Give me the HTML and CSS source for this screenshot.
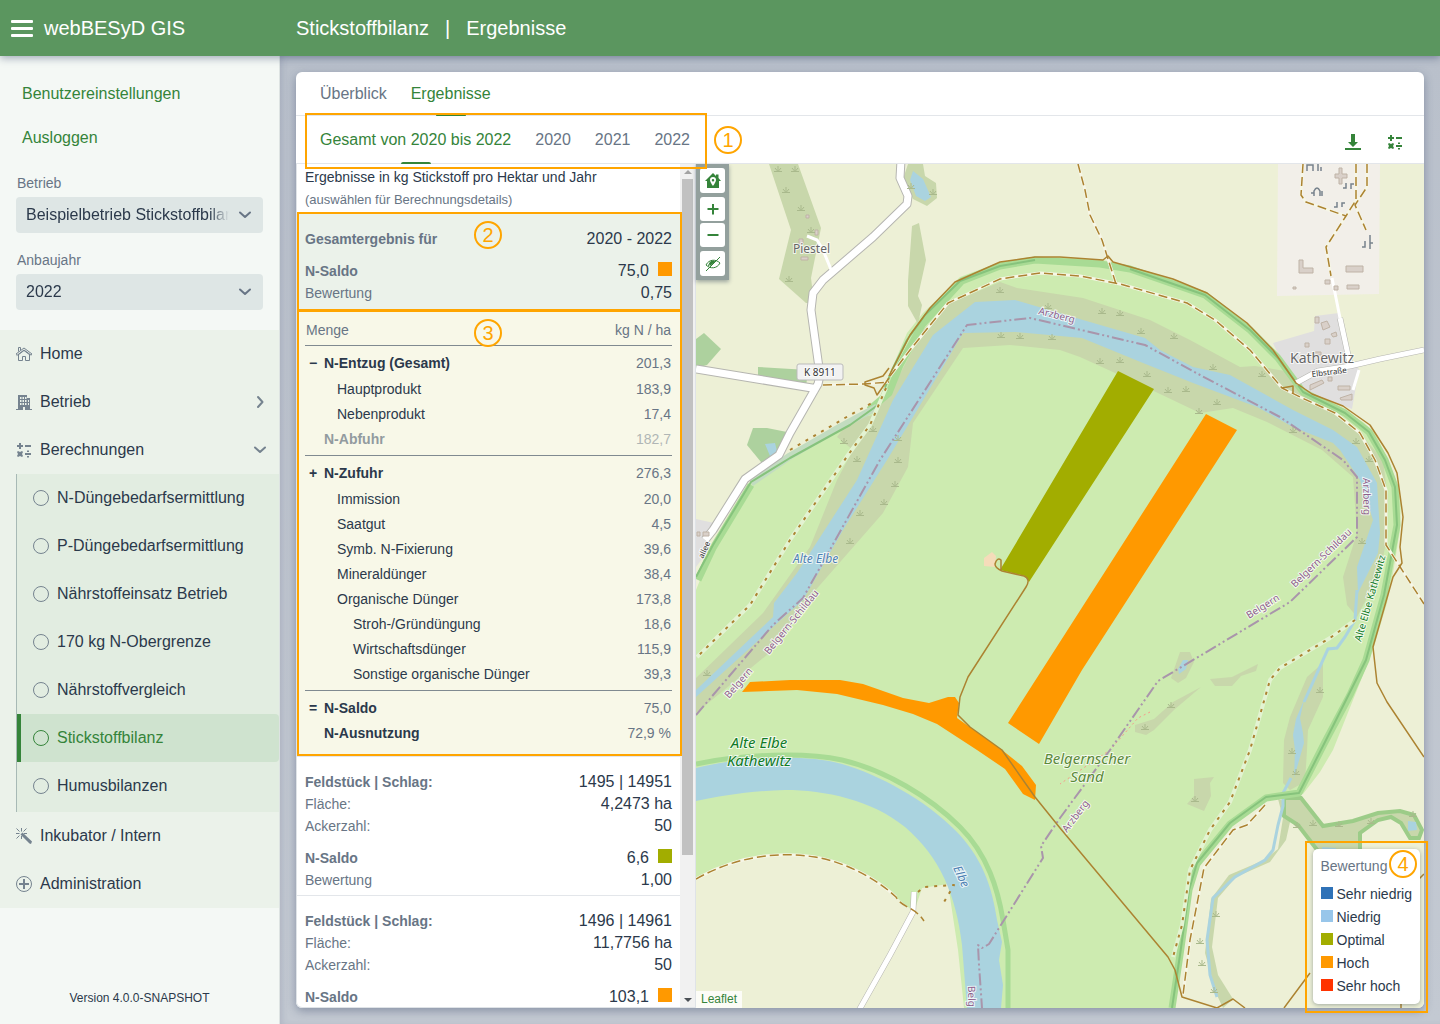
FILE: index.html
```
<!DOCTYPE html>
<html lang="de">
<head>
  <meta charset="utf-8">
  <title>webBESyD GIS</title>
  <link rel="stylesheet" href="styles.css">
</head>
<body>
  <!-- shared icons -->
  <svg class="sprite" aria-hidden="true">
    <symbol id="calc" viewBox="0 0 16 16">
      <path d="M3 1h2v2h2v2H5v2H3V5H1V3h2zM9 3h6v2H9zM9 11h6v2H9zM11 8.500h2v1.500h-2zM11 14h2v1.500h-2zM1 10l1-1 2 1 2-1 1 1-1 2 1 2-1 1-2-1-2 1-1-1 1-2z"/>
    </symbol>
    <symbol id="circle" viewBox="0 0 16 16">
      <circle cx="8" cy="8" r="7.500" fill="none" stroke="currentColor"/>
    </symbol>
    <symbol id="down" viewBox="0 0 16 16">
      <path d="M3 5.500l5 4.500 5-4.500" fill="none" stroke="currentColor" stroke-width="2" stroke-linecap="round" stroke-linejoin="round"/>
    </symbol>
  </svg>

  <header class="topbar">
    <div class="brand">
      <button class="menu-toggle" aria-label="Menü"><span></span><span></span><span></span></button>
      <span>webBESyD GIS</span>
    </div>
    <div class="crumbs"><span>Stickstoffbilanz</span><span>|</span><span>Ergebnisse</span></div>
  </header>

  <div class="layout">
    <aside class="sidebar">
      <div class="user-links">
        <a href="#">Benutzereinstellungen</a>
        <a href="#">Ausloggen</a>
      </div>
      <div class="field">
        <label for="betrieb">Betrieb</label>
        <div class="select-box">
          <select id="betrieb"><option>Beispielbetrieb Stickstoffbilanz</option></select>
          <svg class="icon"><use href="#down"/></svg>
        </div>
      </div>
      <div class="field">
        <label for="anbaujahr">Anbaujahr</label>
        <div class="select-box">
          <select id="anbaujahr"><option>2022</option><option>2021</option><option>2020</option></select>
          <svg class="icon"><use href="#down"/></svg>
        </div>
      </div>

      <nav class="nav">
        <a class="nav-item" href="#">
          <svg class="icon" viewBox="0 0 16 16" fill="none" stroke="currentColor"><path d="M.5 9.200L0 8l8-6 8 6-.8 1.200L8 4 .8 9.500M2.500 8.500v6h4v-4h3v4h4v-6M2.500 5.500v-4h2v2.500M2 9l6-4.500L14 9"/></svg>
          Home
        </a>
        <button class="nav-item">
          <svg class="icon" viewBox="0 0 16 16"><path fill-rule="evenodd" d="M2 1h9v3h3v11h2v1H0v-1h2zM4 3v2h1.500V3zM6.500 3v2H8V3zM9 3v2h1.500V3zM4 6v2h1.500V6zM6.500 6v2H8V6zM9 6v2h1.500V6zM4 9v2h1.500V9zM6.500 9v2H8V9zM9 9v2h1.500V9zM12 6v2h1V6zM12 9v2h1V9zM7 13v3h2v-3z"/></svg>
          Betrieb
          <svg class="icon toggle" viewBox="0 0 16 16" fill="none" stroke="currentColor" stroke-width="2" stroke-linecap="round" stroke-linejoin="round"><path d="M6 3l4.500 5L6 13"/></svg>
        </button>
        <button class="nav-item">
          <svg class="icon"><use href="#calc"/></svg>
          Berechnungen
          <svg class="icon toggle"><use href="#down"/></svg>
        </button>
        <div class="subnav">
          <a class="nav-item" href="#"><svg class="icon"><use href="#circle"/></svg>N-Düngebedarfsermittlung</a>
          <a class="nav-item" href="#"><svg class="icon"><use href="#circle"/></svg>P-Düngebedarfsermittlung</a>
          <a class="nav-item" href="#"><svg class="icon"><use href="#circle"/></svg>Nährstoffeinsatz Betrieb</a>
          <a class="nav-item" href="#"><svg class="icon"><use href="#circle"/></svg>170 kg N-Obergrenze</a>
          <a class="nav-item" href="#"><svg class="icon"><use href="#circle"/></svg>Nährstoffvergleich</a>
          <a class="nav-item active" href="#"><svg class="icon"><use href="#circle"/></svg>Stickstoffbilanz</a>
          <a class="nav-item" href="#"><svg class="icon"><use href="#circle"/></svg>Humusbilanzen</a>
        </div>
        <a class="nav-item" href="#">
          <svg class="icon" viewBox="0 0 16 16"><path d="M4.500 6.500L6.500 4.500 16 13.500 15 16 13.500 15.500zM5 0h1v3.500H5zM0 5h3.500v1H0zM8 5h3v1H8zM5 8h1v3H5z"/><path d="M.5.5l3 3M10.500.5l-3 3M.5 10.500l3-3" stroke="currentColor"/></svg>
          Inkubator / Intern
        </a>
        <a class="nav-item" href="#">
          <svg class="icon"><use href="#circle"/><path d="M7 3h2v4h4v2H9v4H7V9H3V7h4z"/></svg>
          Administration
        </a>
      </nav>
      <p class="version">Version 4.0.0-SNAPSHOT</p>
    </aside>

    <main class="content">
      <section class="card">
        <div class="tabs">
          <a href="#">Überblick</a>
          <a class="selected" href="#">Ergebnisse</a>
        </div>
        <div class="tabs tabs-years">
          <a class="selected" href="#">Gesamt von 2020 bis 2022</a>
          <a href="#">2020</a>
          <a href="#">2021</a>
          <a href="#">2022</a>
          <div class="mark mark-tabs"></div>
          <b class="badge">1</b>
          <div class="actions">
            <button aria-label="Herunterladen"><svg class="icon" viewBox="0 0 16 16"><path d="M6 0h4v8h3l-5 5-5-5h3zM0 14h16v2H0z"/></svg></button>
            <button aria-label="Berechnen"><svg class="icon"><use href="#calc"/></svg></button>
          </div>
        </div>

        <div class="split">
          <div class="results">
            <div class="list">
              <div class="intro">
                <p>Ergebnisse in kg Stickstoff pro Hektar und Jahr</p>
                <p class="hint">(auswählen für Berechnungsdetails)</p>
              </div>

              <article class="entry entry-selected">
                <dl>
                  <div class="row"><dt><b>Gesamtergebnis für</b></dt><dd>2020 - 2022</dd></div>
                  <div class="row gap"><dt><b>N-Saldo</b></dt><dd>75,0<i class="dot hoch"></i></dd></div>
                  <div class="row"><dt>Bewertung</dt><dd>0,75</dd></div>
                </dl>
                <div class="mark"></div>
                <b class="badge">2</b>
              </article>

              <article class="details">
                <table>
                  <thead>
                    <tr><th>Menge</th><td>kg N / ha</td></tr>
                  </thead>
                  <tbody>
                    <tr class="main"><th><span>−</span>N-Entzug (Gesamt)</th><td>201,3</td></tr>
                    <tr class="sub"><th>Hauptprodukt</th><td>183,9</td></tr>
                    <tr class="sub"><th>Nebenprodukt</th><td>17,4</td></tr>
                    <tr class="main muted"><th><span></span>N-Abfuhr</th><td>182,7</td></tr>
                  </tbody>
                  <tbody>
                    <tr class="main"><th><span>+</span>N-Zufuhr</th><td>276,3</td></tr>
                    <tr class="sub"><th>Immission</th><td>20,0</td></tr>
                    <tr class="sub"><th>Saatgut</th><td>4,5</td></tr>
                    <tr class="sub"><th>Symb. N-Fixierung</th><td>39,6</td></tr>
                    <tr class="sub"><th>Mineraldünger</th><td>38,4</td></tr>
                    <tr class="sub"><th>Organische Dünger</th><td>173,8</td></tr>
                    <tr class="subsub"><th>Stroh-/Gründüngung</th><td>18,6</td></tr>
                    <tr class="subsub"><th>Wirtschaftsdünger</th><td>115,9</td></tr>
                    <tr class="subsub"><th>Sonstige organische Dünger</th><td>39,3</td></tr>
                  </tbody>
                  <tbody>
                    <tr class="main"><th><span>=</span>N-Saldo</th><td>75,0</td></tr>
                    <tr class="main"><th><span></span>N-Ausnutzung</th><td>72,9 %</td></tr>
                  </tbody>
                </table>
                <div class="mark"></div>
                <b class="badge">3</b>
              </article>

              <article class="entry">
                <dl>
                  <div class="row"><dt><b>Feldstück | Schlag:</b></dt><dd>1495 | 14951</dd></div>
                  <div class="row"><dt>Fläche:</dt><dd>4,2473 ha</dd></div>
                  <div class="row"><dt>Ackerzahl:</dt><dd>50</dd></div>
                  <div class="row gap"><dt><b>N-Saldo</b></dt><dd>6,6<i class="dot optimal"></i></dd></div>
                  <div class="row"><dt>Bewertung</dt><dd>1,00</dd></div>
                </dl>
              </article>

              <article class="entry">
                <dl>
                  <div class="row"><dt><b>Feldstück | Schlag:</b></dt><dd>1496 | 14961</dd></div>
                  <div class="row"><dt>Fläche:</dt><dd>11,7756 ha</dd></div>
                  <div class="row"><dt>Ackerzahl:</dt><dd>50</dd></div>
                  <div class="row gap"><dt><b>N-Saldo</b></dt><dd>103,1<i class="dot hoch"></i></dd></div>
                </dl>
              </article>
            </div>
            <div class="scrollbar" aria-hidden="true">
              <i class="arrow up"></i>
              <div class="track"><div class="thumb"></div></div>
              <i class="arrow"></i>
            </div>
          </div>

          <div class="map">
            <svg class="canvas" viewBox="696 164 728 844" preserveAspectRatio="xMinYMin slice">
              <defs>
                <symbol id="tuft" viewBox="0 0 8 7" overflow="visible">
                  <path d="M0 6.500h8M4 6V1M3.500 6L1 3M4.500 6L7 3" fill="none" stroke="#a9b98c"/>
                </symbol>
              </defs>
              <rect x="696" y="164" width="728" height="844" fill="#edf0d6"/>
              <!-- meadows between the dykes -->
              <path class="grass" d="M696 590L713 548 751 483 800 452 877 403 890 373 907 333 923 313 960 277 1000 262 1030 257 1060 257 1103 260 1133 267 1173 279 1207 293 1247 323 1273 350 1296 383 1307 393 1343 410 1363 422 1375 433 1388 460 1396 480 1401 500 1400 530 1393 573 1387 603 1373 650 1353 700 1333 750 1320 772 1303 794 1267 797 1230 822 1198 860 1190 883 1183 940 1175 1008H964L958 950 948 884 922 888 914 912 896 897 880 884 845 864 815 857 780 855 745 859 715 868 696 879z"/>
              <path d="M1278 164h102l-1 130-102 2z" fill="#f2efe9"/>
              <!-- scrub -->
              <g class="scrub">
                <path d="M769 164h29l23 64-10 50 3 25-8 0-27-24 12-49V230z"/>
                <path d="M908 164h15l2 12 11 7 1 15-10 8-14-7-10-20z"/>
                <path d="M912 226l7-3 7 37-8 36 4 9-4 19-10-18v-25z"/>
                <path d="M696 678L763 613 810 547 837 480 853 450 837 437 850 420 873 415 890 393 923 330 950 303 1000 282 1017 288 1083 298 1150 320 1190 340 1240 367 1255 366 1285 371 1327 407 1360 433 1383 460 1388 500 1385 547 1380 573 1357 617 1347 605 1343 577 1357 533 1353 477 1322 450 1267 422 1233 408 1200 413 1137 383 1080 357 1060 350 1010 345 963 348 913 423 908 467 883 513 813 593 773 650 696 713z"/>
                <path d="M1323 663v34l-15 33-1 20-2 32-15 8-7-7 1-43 6-23 17-40z"/>
                <path d="M1180 652h10l4 10-8 16-8 5-7-5z"/>
                <path d="M1210 679l22-2 26-13-2 7-15 5-9 10h-17z"/>
                <path d="M1135 725l19-6 19-17 28-15-26 22-21 21-8 5-11-3z"/>
                <path d="M1194 779l20-2-4 6 1 13-7 15-17-7 7-8z"/>
                <path d="M1278 799l5 19-5 31-14 11-35 15-18 24-6 54 11 40 7 15 10-9-15-24-6-28 6-49 18-21 34-15 16-22 8-36z"/>
                <path stroke="#9ccc88" stroke-width="4" d="M1284 798h17l22 28 30-5 25-8 22-2 14 4 8 15-3 8h-9l-9-15-10-6-13 3-18 13v18h-42l-20-26-14-9z"/>
              </g>
              <!-- woodland -->
              <g fill="#add19e">
                <path d="M696 339l8-6 17 16-14 16-11 3zM758 367l50 3-2 17-48-9z"/>
                <path d="M747 445l6-17h14l20 4-14 32-12-2z"/>
              </g>
              <!-- villages -->
              <path d="M696 519l18 4-6 28-12 16zM1273 343l41-12 1-15 24-3 11 46 9 10-7 40-45-18-27-33z" fill="#e0dfdf"/>
              <!-- water -->
              <g class="water">
                <path d="M696 690L773 617 774 603 797 573 857 480 893 400 933 335 975 302 1015 300 1083 320 1145 338 1160 350 1193 367 1230 375 1293 410 1333 430 1357 447 1377 483 1380 533 1378 553 1358 593 1357 567 1373 520 1360 480 1340 450 1333 443 1293 427 1257 407 1193 383 1143 363 1082 338 1015 332 963 333 947 360 913 417 887 460 843 530 803 600 773 627 696 697z"/>
                <path d="M696 768C745 756 805 754 842 764C880 775 925 800 955 830C982 857 992 886 997 920L1002 942 999 960 1003 985 1001 1008H967L962 945C956 895 940 857 905 827C872 800 825 790 785 790C750 791 720 796 696 801z"/>
                <path d="M913 171l10 8 8 18-6 4-9-5-6-16zM765 444l10-1 3 12-8 1zM1183 660h5l-2 9-7 5-1-5z"/>
                <path d="M1304 700l-4 18 3 15 1 10-10 35 1-28-2-15 3-16z"/>
                <path d="M1408 821l8 1 1 8-9 1zM1322 847l14 1v4h-14z"/>
              </g>
              <g fill="none" stroke="#aad3df" stroke-width="3">
                <path d="M1357 590L1355 620 1345 637 1337 648 1328 649 1304 702M1291 778L1283 793 1283 806 1278 825 1273 850 1265 860 1235 877 1213 898 1207 940 1210 975 1217 997"/>
              </g>
              <!-- dykes -->
              <g fill="none" stroke="#a8db94" stroke-width="7" stroke-linejoin="round">
                <path d="M698 580L713 548 751 485M869 410L889 393 900 365 922 325 962 281 1000 266 1035 260 1100 264 1130 269 1205 295 1250 330 1278 358 1303 392 1345 413 1369 432 1385 460 1395 487 1397 525 1384 595 1366 660 1350 695 1325 742 1299 793 1266 798 1230 824 1197 864 1189 890 1180 955 1172 1008"/>
                <path d="M696 764C745 754 805 752 842 760C885 770 930 797 960 827C988 855 998 890 1003 920L1008 950V1008" stroke-width="5"/>
                <path d="M751 483L790 456 840 427 877 407" stroke="#c2dcc0"/>
                <path d="M696 577L713 545 751 482 790 458 850 425 878 405 892 370 907 340 925 315 960 281 1000 266 1035 260M1130 269L1205 295 1250 330 1278 358 1303 392 1345 413 1369 432 1385 460 1395 487 1397 525 1384 595 1366 660 1325 742 1299 793 1266 797 1230 823 1197 863 1189 890 1180 955 1172 1008" stroke="#86c37c" stroke-width="2"/>
              </g>
              <!-- roads -->
              <g class="road-casing">
                <path d="M901 160L900 178 908 196 907 204 873 237 823 280 813 293 811 310 820 375 818 384 790 433 779 455 745 479 713 530 705 540M696 369L818 389"/>
                <path d="M1296 383L1318 371 1350 366 1380 359 1424 350M1340 318L1350 364M914 892L913 912 890 955 858 1012"/>
              </g>
              <g class="road">
                <path d="M901 160L900 178 908 196 907 204 873 237 823 280 813 293 811 310 820 375 818 384 790 433 779 455 745 479 713 530 705 540M696 369L818 389"/>
                <path d="M1296 383L1318 371 1350 366 1380 359 1424 350M1340 318L1350 364M914 892L913 912 890 955 858 1012"/>
              </g>
              <path d="M807 236l10 4 6 10 9 22M1332 278l8 40M1359 370l-6 20" fill="none" stroke="#fff" stroke-width="3"/>
              <!-- buildings -->
              <g fill="#d9d0c9" stroke="#bfb3a6">
                <path d="M1299 260h4v8h10v5h-14zM1346 266h17v6h-17zM1347 285h12v4h-12zM1325 280h5v4h-5zM1334 286h4v4h-4zM1339 168h3v6h5v4h-5v6h-3v-6h-4v-4h4zM1293 287h3v2h-3z"/>
                <path d="M1315 317h4v6h-4zM1321 323l6-2 3 6-7 3zM1331 334l5-2 1 4-4 1zM1325 339h5v5h-5zM1305 343h4v4h-4zM1310 385l12-5 2 3-14 7zM1338 386h12v4h-12zM1340 398l12-4v6h-11zM1313 352h8v3h-8zM1328 377h4v4h-4zM697 532h3v4h-3zM703 532h6v4h-6z"/>
                <path d="M799 239h4v5h-4zM815 230h3v5h-3zM801 257h7v3h-7zM806 215h3v3h-3z"/>
              </g>
              <g fill="none" stroke="#77828c" stroke-width="1.500">
                <path d="M1307 171v-6h6v6M1318 171v-7M1321 171v-4M1314 196v-5q3-6 6 0v5M1311 193h3M1322 196v-5M1343 188h3v-5M1351 189v-5h3M1334 207h3v-5M1342 207v-4h3M1362 247h3v-6M1370 235v14M1370 243h3"/>
              </g>
              <!-- paths and tracks -->
              <g class="track-halo">
                <path d="M1078 164L1085 190 1090 215 1102 240 1116 284M823 385L864 384 889 382M890 376L910 350 948 303 1000 279 1040 273 1080 276 1120 284 1187 303 1215 320 1250 350 1282 388 1300 397 1335 413 1360 433 1375 460 1386 490 1386 545 1424 604"/>
                <path d="M1303 164L1301 195 1306 202 1346 216 1326 247 1331 276M1356 164V200L1346 216M1367 164V187L1355 205 1366 230"/>
                <path d="M1265 805L1247 825 1233 830 1204 868 1190 940 1183 995M696 879C730 860 770 850 815 857C850 863 880 882 896 897"/>
              </g>
              <g class="track">
                <path d="M1078 164L1085 190 1090 215 1102 240 1116 284M823 385L864 384 889 382M890 376L910 350 948 303 1000 279 1040 273 1080 276 1120 284 1187 303 1215 320 1250 350 1282 388 1300 397 1335 413 1360 433 1375 460 1386 490 1386 545 1424 604"/>
                <path d="M1303 164L1301 195 1306 202 1346 216 1326 247 1331 276M1356 164V200L1346 216M1367 164V187L1355 205 1366 230"/>
                <path d="M1265 805L1247 825 1233 830 1204 868 1190 940 1183 995M696 879C730 860 770 850 815 857C850 863 880 882 896 897C902 908 914 906 924 921"/>
              </g>
              <g class="foot-halo"><path d="M886 388L870 425 848 455 790 540 750 605 697 657M1355 620L1330 638 1280 668 1270 680 1250 750 1230 802 1210 830 1190 870 1182 925 1173 957"/></g>
              <g class="foot"><path d="M886 388L870 425 848 455 790 540 750 605 697 657M1355 620L1330 638 1280 668 1270 680 1250 750 1230 802 1210 830 1190 870 1182 925 1173 957M790 450L850 415 872 403M918 892L924 887 954 885 944 902"/></g>
              <path d="M1150 712l-12 6-28 32-50 34" fill="none" stroke="#f79a8a" stroke-dasharray="2 3"/>
              <g class="way">
                <path d="M889 376L910 335 930 308 955 282 1000 262 1035 257 1060 257 1103 260 1108 256 1113 262 1173 279 1207 293 1247 323 1273 350 1296 383 1312 394 1343 406 1370 425 1388 453 1397 473 1403 517 1400 547 1402 563 1393 577 1373 647 1377 683 1387 702 1424 757"/>
                <path d="M889 368l-6 8-18 6 0 3 9 3 3 7 12-17M1282 388l11-2v8"/>
                <path d="M1401 1002v8M1284 1008L1310 973M1418 880L1424 874"/>
              </g>
              <path d="M984 558l8-6 4 4-1 11-11-1z" fill="#f5dcba"/>
              <!-- tufts -->
              <g>
                <use href="#tuft" x="774" y="165" width="8" height="7"/><use href="#tuft" x="791" y="165" width="8" height="7"/><use href="#tuft" x="782" y="186" width="8" height="7"/><use href="#tuft" x="797" y="204" width="8" height="7"/><use href="#tuft" x="807" y="226" width="8" height="7"/><use href="#tuft" x="785" y="275" width="8" height="7"/>
                <use href="#tuft" x="907" y="182" width="8" height="7"/><use href="#tuft" x="929" y="188" width="8" height="7"/><use href="#tuft" x="996" y="286" width="8" height="7"/><use href="#tuft" x="1044" y="302" width="8" height="7"/><use href="#tuft" x="997" y="331" width="8" height="7"/><use href="#tuft" x="1016" y="332" width="8" height="7"/><use href="#tuft" x="1048" y="333" width="8" height="7"/>
                <use href="#tuft" x="1098" y="307" width="8" height="7"/><use href="#tuft" x="1116" y="309" width="8" height="7"/><use href="#tuft" x="1137" y="327" width="8" height="7"/><use href="#tuft" x="1170" y="332" width="8" height="7"/><use href="#tuft" x="1096" y="357" width="8" height="7"/><use href="#tuft" x="1116" y="356" width="8" height="7"/><use href="#tuft" x="1143" y="370" width="8" height="7"/><use href="#tuft" x="1164" y="386" width="8" height="7"/><use href="#tuft" x="1182" y="385" width="8" height="7"/><use href="#tuft" x="1195" y="407" width="8" height="7"/><use href="#tuft" x="1209" y="363" width="8" height="7"/><use href="#tuft" x="1258" y="370" width="8" height="7"/><use href="#tuft" x="1213" y="398" width="8" height="7"/><use href="#tuft" x="1289" y="426" width="8" height="7"/><use href="#tuft" x="1352" y="437" width="8" height="7"/>
                <use href="#tuft" x="869" y="425" width="8" height="7"/><use href="#tuft" x="840" y="437" width="8" height="7"/><use href="#tuft" x="894" y="434" width="8" height="7"/><use href="#tuft" x="853" y="455" width="8" height="7"/><use href="#tuft" x="894" y="456" width="8" height="7"/><use href="#tuft" x="891" y="480" width="8" height="7"/><use href="#tuft" x="880" y="498" width="8" height="7"/><use href="#tuft" x="856" y="509" width="8" height="7"/><use href="#tuft" x="846" y="537" width="8" height="7"/><use href="#tuft" x="703" y="669" width="8" height="7"/>
                <use href="#tuft" x="1365" y="455" width="8" height="7"/><use href="#tuft" x="1358" y="537" width="8" height="7"/><use href="#tuft" x="1316" y="686" width="8" height="7"/><use href="#tuft" x="1288" y="747" width="8" height="7"/><use href="#tuft" x="1292" y="768" width="8" height="7"/><use href="#tuft" x="1167" y="701" width="8" height="7"/><use href="#tuft" x="1141" y="723" width="8" height="7"/><use href="#tuft" x="1191" y="795" width="8" height="7"/>
                <use href="#tuft" x="1293" y="821" width="8" height="7"/><use href="#tuft" x="1309" y="819" width="8" height="7"/><use href="#tuft" x="1335" y="820" width="8" height="7"/><use href="#tuft" x="1367" y="817" width="8" height="7"/><use href="#tuft" x="1409" y="810" width="8" height="7"/><use href="#tuft" x="1212" y="910" width="8" height="7"/><use href="#tuft" x="1196" y="937" width="8" height="7"/><use href="#tuft" x="1198" y="959" width="8" height="7"/><use href="#tuft" x="1210" y="986" width="8" height="7"/>
              </g>
              <path class="boundary" d="M696 715L773 625 803 598 880 460 967 325 1030 318 1060 325 1145 345 1200 375 1280 417 1343 460 1357 477 1357 537 1290 602 1158 681 1110 750 1060 818 1041 846 1043 858 989 944 982 948 978 945 979 965 982 1008"/>
              <!-- fields -->
              <g>
                <path fill="#a2ad00" d="M1118 371l36 18-125 193-4-6-25-6z"/>
                <path fill="#f90" d="M1206 414l31 16-155 240-43 74-31-21z"/>
                <path fill="#f90" d="M742 692l8-10 40-2h50l23 4 40 14 26 5 19-6h7l4 6-2 15 45 32 20 16 14 19-1 15-12-6-18-25-28-19-40-26-24-10-30-9-46-11-40-4z"/>
              </g>
              <g class="way">
                <path d="M1001 571V560q-4-3-6 4q0 4 7 7l22 5q7 3 2 11L968 677l-8 20-2 18 12 12 32 23 33 47 25 31 108 129 7 13 7 27 35 11 16-9 12 9"/>
              </g>
              <g class="labels">
                <rect x="797" y="364" width="46" height="16" rx="2" fill="#f2f2f2" stroke="#bbb"/>
                <text x="804" y="376" font-size="10">K 8911</text>
                <text class="town" x="793" y="253" font-size="12">Piestel</text>
                <text class="town" x="1290" y="363" font-size="14">Kathewitz</text>
                <text transform="translate(1312 377) rotate(-7)" font-size="8">Elbstraße</text>
                <text transform="translate(703 559) rotate(-65)" font-size="8">allee</text>
                <g class="place">
                  <text transform="translate(1038 314) rotate(14)">Arzberg</text>
                  <text transform="translate(1363 478) rotate(89)">Arzberg</text>
                  <text transform="translate(1067 833) rotate(-53)">Arzberg</text>
                  <text transform="translate(769 655) rotate(-51)">Belgern-Schildau</text>
                  <text transform="translate(729 699) rotate(-49)">Belgern</text>
                  <text transform="translate(1249 619) rotate(-32)">Belgern</text>
                  <text transform="translate(1295 588) rotate(-44)">Belgern-Schildau</text>
                  <text transform="translate(968 986) rotate(89)">Belg</text>
                </g>
                <g class="river">
                  <text x="793" y="563">Alte Elbe</text>
                  <text transform="translate(953 868) rotate(65)">Elbe</text>
                </g>
                <g class="reserve">
                  <text x="759" y="748">Alte Elbe</text>
                  <text x="759" y="766">Kathewitz</text>
                  <text class="sand" x="1087" y="764">Belgernscher</text>
                  <text class="sand" x="1087" y="782">Sand</text>
                </g>
                <text class="reserve-small" transform="translate(1361 642) rotate(-74)">Alte Elbe Kathewitz</text>
              </g>
            </svg>

            <div class="map-tools">
              <button aria-label="Zum Betrieb"><svg class="icon" viewBox="0 0 16 16"><path fill-rule="evenodd" d="M8 0l3 3V1.500h2.500V5L16 8h-2v7H2V8H0zM8 4a3 3 0 0 0-3 3c0 2 3 6 3 6s3-4 3-6a3 3 0 0 0-3-3zm0 2a1.200 1.200 0 1 1 0 2.500A1.200 1.200 0 0 1 8 6z"/></svg></button>
              <div class="zoom">
                <button aria-label="Vergrößern"><svg class="icon" viewBox="0 0 16 16"><path d="M7 3h2v4h4.500v2H9v4.500H7V9H2.500V7H7z"/></svg></button>
                <button aria-label="Verkleinern"><svg class="icon" viewBox="0 0 16 16"><path d="M2.500 7h11v2h-11z"/></svg></button>
              </div>
              <button aria-label="Ebene ausblenden"><svg class="icon" viewBox="0 0 16 16"><g fill="none" stroke="currentColor"><path d="M1 15L15 1M1 9c3-6 10-6 14-2-3 6-10 6-14 2zM3.500 10C4 6 8 5 11 5.500"/></g><path d="M5 10a3 3 0 0 1 5-4z"/></svg></button>
            </div>
            <a class="leaflet" href="#">Leaflet</a>

            <div class="legend">
              <h3>Bewertung</h3>
              <ul>
                <li><i class="sehr-niedrig"></i>Sehr niedrig</li>
                <li><i class="niedrig"></i>Niedrig</li>
                <li><i class="optimal"></i>Optimal</li>
                <li><i class="hoch"></i>Hoch</li>
                <li><i class="sehr-hoch"></i>Sehr hoch</li>
              </ul>
              <div class="mark"></div>
              <b class="badge">4</b>
            </div>
          </div>
        </div>
      </section>
    </main>
  </div>
</body>
</html>
```

FILE: styles.css
```
* {
  box-sizing: border-box;
}

body {
  margin: 0;
  height: 100vh;
  display: flex;
  flex-direction: column;
  font-family: "Liberation Sans", Arial, sans-serif;
  font-size: 16px;
  color: #2b394b;
  background: #f4f8f5;
}

p, h3, ul, dl, dd {
  margin: 0;
  padding: 0;
}

a {
  color: #35843a;
  text-decoration: none;
}

button {
  font: inherit;
  color: inherit;
  border: none;
  background: none;
  padding: 0;
  cursor: pointer;
}

.sprite {
  display: none;
}

.icon {
  width: 16px;
  height: 16px;
  flex: none;
  fill: currentColor;
}

svg.icon[fill="none"] {
  fill: none;
}

/* top bar */
.topbar {
  display: flex;
  align-items: center;
  height: 56px;
  flex: none;
  background: #5b965f;
  color: #fff;
  font-size: 20px;
  box-shadow: 0 2px 8px rgba(30, 50, 90, 0.4);
  position: relative;
  z-index: 2;
}

.brand {
  display: flex;
  align-items: center;
  gap: 11px;
  width: 296px;
  padding-left: 11px;
}

.menu-toggle {
  display: flex;
  flex-direction: column;
  gap: 4px;
  width: 22px;
}

.menu-toggle span {
  height: 3px;
  border-radius: 1px;
  background: #fff;
}

.crumbs {
  display: flex;
  gap: 16px;
}

.layout {
  display: flex;
  flex: 1;
  min-height: 0;
}

/* sidebar */
.sidebar {
  display: flex;
  flex-direction: column;
  width: 280px;
  flex: none;
  border-right: 1px solid #dde3e2;
}

.user-links {
  display: flex;
  flex-direction: column;
  padding: 16px 22px 14px;
  line-height: 44px;
}

.field {
  padding: 0 16px;
  margin-bottom: 18px;
}

.field label {
  display: block;
  padding: 1px 0 6px 1px;
  font-size: 14px;
  line-height: 16px;
  color: #687585;
}

.select-box {
  display: flex;
  align-items: center;
  width: 247px;
  height: 36px;
  padding-right: 10px;
  border-radius: 4px;
  background: #dee6e5;
  color: #687585;
}

.select-box select {
  appearance: none;
  flex: 1;
  min-width: 0;
  height: 100%;
  margin-right: 8px;
  padding: 0 0 1px 10px;
  border: none;
  background: none;
  font: inherit;
  color: #2b394b;
  -webkit-mask-image: linear-gradient(to left, transparent, #000 20px);
  mask-image: linear-gradient(to left, transparent, #000 20px);
}

.nav {
  margin-top: 2px;
  background: #ebf2ea;
}

.nav-item {
  display: flex;
  align-items: center;
  gap: 8px;
  width: 100%;
  height: 48px;
  padding: 0 11px 0 16px;
  color: #2b394b;
  text-align: left;
}

.nav-item .icon {
  color: #75838f;
}

.nav-item .toggle {
  margin-left: auto;
}

.subnav {
  margin-left: 16px;
  padding-bottom: 2px;
  border-left: 1px solid #a7b9b5;
  background: #e2ede1;
}

.nav-item.active {
  background: #cfe3cf;
  color: #35843a;
  border-left: 4px solid #35843a;
  padding-left: 12px;
  border-radius: 0 4px 4px 0;
}

.nav-item.active .icon {
  color: #35843a;
}

.version {
  margin-top: auto;
  padding-bottom: 19px;
  font-size: 12px;
  line-height: 14px;
  text-align: center;
}

/* content card */
.content {
  flex: 1;
  min-width: 0;
  padding: 16px;
  background: linear-gradient(#b9c0cb, #c3c9d2);
  box-shadow: inset 4px 0 6px -2px rgba(60, 70, 110, 0.15);
}

.card {
  display: flex;
  flex-direction: column;
  height: 100%;
  background: #fff;
  border-radius: 6px;
  box-shadow: 0 3px 10px rgba(50, 65, 100, 0.4);
}

.tabs {
  position: relative;
  display: flex;
  gap: 24px;
  height: 44px;
  flex: none;
  padding: 0 24px;
  line-height: 43px;
  border-bottom: 1px solid #e3e6ea;
}

.tabs a {
  position: relative;
  color: #687585;
}

.tabs a.selected {
  color: #35843a;
}

.tabs a.selected::after {
  content: "";
  position: absolute;
  left: 50%;
  bottom: -1px;
  width: 30px;
  height: 2px;
  margin-left: -15px;
  border-radius: 2px 2px 0 0;
  background: #35843a;
}

.tabs-years {
  height: 48px;
  line-height: 47px;
  z-index: 1;
}

.actions {
  display: flex;
  gap: 26px;
  align-items: center;
  margin-left: auto;
  margin-right: -3px;
  padding-top: 4px;
  color: #35843a;
}

.actions button,
.map-tools button {
  display: flex;
  align-items: center;
  justify-content: center;
}

/* numbered marks */
.mark {
  position: absolute;
  inset: -2px -2px 0 0;
  border: 2px solid #ffa500;
  pointer-events: none;
  z-index: 1;
}

.badge {
  position: absolute;
  width: 28px;
  height: 28px;
  border: 2px solid #ffa500;
  border-radius: 50%;
  color: #ffa500;
  font-size: 20px;
  font-weight: normal;
  line-height: 24px;
  text-align: center;
  z-index: 1;
}

.mark-tabs {
  inset: -3px auto -6px 9px;
  width: 402px;
}

.tabs .badge {
  left: 418px;
  top: 10px;
}

.list .badge {
  left: 177px;
  top: 7px;
}

/* result list */
.split {
  display: flex;
  flex: 1;
  min-height: 0;
}

.results {
  display: flex;
  width: 400px;
  flex: none;
  overflow: hidden;
  border: 1px solid #dfe3e7;
  border-top: none;
  border-radius: 0 0 0 6px;
}

.list {
  flex: 1;
}

.intro {
  padding: 2px 8px 4px;
  font-size: 14px;
  line-height: 22px;
}

.intro .hint {
  font-size: 13px;
  line-height: 23px;
  margin-bottom: -1px;
  color: #687585;
}

.entry {
  position: relative;
  padding: 14px 8px 4px;
  line-height: 22px;
  border-bottom: 1px solid #e3e6ea;
}

.entry-selected {
  padding-bottom: 7px;
  background: #ebf2ea;
}

.row {
  display: flex;
  justify-content: space-between;
}

.row.gap {
  margin-top: 10px;
}

.row dt {
  font-size: 14px;
  color: #687585;
}

.dot {
  display: inline-block;
  width: 14px;
  height: 14px;
  margin-left: 9px;
}

.details {
  position: relative;
  padding: 6px 8px 10px;
  background: #f8f8e8;
  border-bottom: 1px solid #e3e6ea;
  font-size: 14px;
}

.details table {
  width: 100%;
  border-collapse: separate;
  border-spacing: 0;
  line-height: 25px;
}

.details th,
.details td {
  padding: 0 1px;
  font-weight: normal;
  text-align: left;
}

.details td {
  text-align: right;
  color: #687585;
}

.details thead th {
  color: #687585;
}

.details thead tr > *,
.details tbody:not(:last-child) tr:last-child > * {
  border-bottom: 1px solid #808a90;
}

.details thead tr > * {
  padding-bottom: 2px;
}

.details tbody tr:first-child > * {
  padding-top: 5px;
}

.details .main + .sub > * {
  padding-top: 1px;
}

.details tbody:not(:last-child) tr:last-child > * {
  padding-bottom: 3px;
}

.details .main th {
  padding-left: 4px;
  font-weight: bold;
}

.details .main span {
  display: inline-block;
  width: 15px;
}

.details .sub th {
  padding-left: 32px;
}

.details .subsub th {
  padding-left: 48px;
}

.details .muted th {
  color: #929b9f;
}

.details .muted td {
  color: #b0b6b5;
}

.scrollbar {
  display: flex;
  flex-direction: column;
  align-items: center;
  width: 15px;
  background: #f1f1f1;
}

.track {
  flex: 1;
  width: 11px;
}

.thumb {
  height: 83%;
  background: #c1c1c1;
}

.arrow {
  margin: 5px 0;
  border: 4px solid transparent;
  border-top-color: #4a4f55;
  border-bottom: none;
}

.arrow.up {
  margin: 6px 0 5px;
  border-top: none;
  border-bottom: 4px solid #a3a3a3;
}

.sehr-niedrig { background: #2f72b7; }
.niedrig { background: #98c6ea; }
.optimal { background: #a2ad00; }
.hoch { background: #ff9900; }
.sehr-hoch { background: #ff3300; }

/* map */
.map {
  position: relative;
  flex: 1;
  min-width: 0;
}

.canvas {
  display: block;
  width: 100%;
  height: 100%;
  border-radius: 0 0 6px 0;
  font-family: "Noto Sans", sans-serif;
}

.grass { fill: #cdebb0; }
.scrub { fill: #c8d7ab; }
.water { fill: #aad3df; }

.road-casing,
.road,
.way,
.canvas .track,
.track-halo,
.foot,
.foot-halo,
.boundary {
  fill: none;
  stroke-linejoin: round;
}

.road-casing { stroke: #b5b5b0; stroke-width: 9px; }
.road { stroke: #fff; stroke-width: 7px; }
.road-casing path + path { stroke-width: 6px; }
.road path + path { stroke-width: 5px; }
.way { stroke: #ac8331; stroke-width: 1.5; }
.canvas .track { stroke: #ac8331; stroke-width: 1.5; stroke-dasharray: 9 4; }
.track-halo { stroke: #f6f6e6; stroke-width: 3px; }
.foot-halo { stroke: #e3f3d2; stroke-width: 4px; }
.foot { stroke: #ac8331; stroke-width: 2px; stroke-dasharray: 3 6; }
.boundary { stroke: #a995ab; stroke-width: 2px; stroke-dasharray: 12 3 2 3 2 3; }

.labels text {
  fill: #333;
  stroke: rgba(255, 255, 255, 0.75);
  stroke-width: 2px;
  paint-order: stroke;
}

.labels .town {
  fill: #666;
}

.labels .place text {
  font-size: 10px;
  fill: #8d618b;
}

.labels .river text {
  font-size: 12px;
  font-style: italic;
  fill: #4d80b3;
}

.labels .reserve text {
  font-size: 15px;
  font-style: italic;
  text-anchor: middle;
  fill: #107a26;
}

.labels .reserve .sand {
  fill: #5b8a3a;
}

.labels .reserve-small {
  font-size: 10px;
  fill: #107a26;
}

.map-tools {
  position: absolute;
  top: 0;
  left: 0;
  display: flex;
  flex-direction: column;
  gap: 4px;
  padding: 4px;
  background: #93a09d;
  color: #35843a;
  box-shadow: 0 2px 4px rgba(40, 60, 80, 0.4);
}

.map-tools button {
  width: 25px;
  height: 25px;
  background: #fff;
  border-radius: 3px;
}

.zoom {
  display: flex;
  flex-direction: column;
  gap: 2px;
}

.map-tools .zoom button {
  height: 24px;
}

.leaflet {
  position: absolute;
  left: 0;
  bottom: 0;
  padding: 0 5px;
  font-size: 12px;
  line-height: 17px;
  background: rgba(255, 255, 255, 0.8);
}

.legend {
  position: absolute;
  right: 4px;
  bottom: 4px;
  padding: 6px 8px;
  border-radius: 5px;
  background: #fff;
  font-size: 14px;
  line-height: 23px;
  box-shadow: 0 1px 4px rgba(40, 60, 80, 0.4);
}

.legend h3 {
  font-size: 14px;
  font-weight: normal;
  margin-bottom: 5px;
  color: #687585;
}

.legend ul {
  list-style: none;
}

.legend i {
  display: inline-block;
  width: 12px;
  height: 12px;
  margin-right: 4px;
}

.legend .mark {
  inset: -8px -8px -9px;
}

.legend .badge {
  top: 1px;
  right: 3px;
}
```
